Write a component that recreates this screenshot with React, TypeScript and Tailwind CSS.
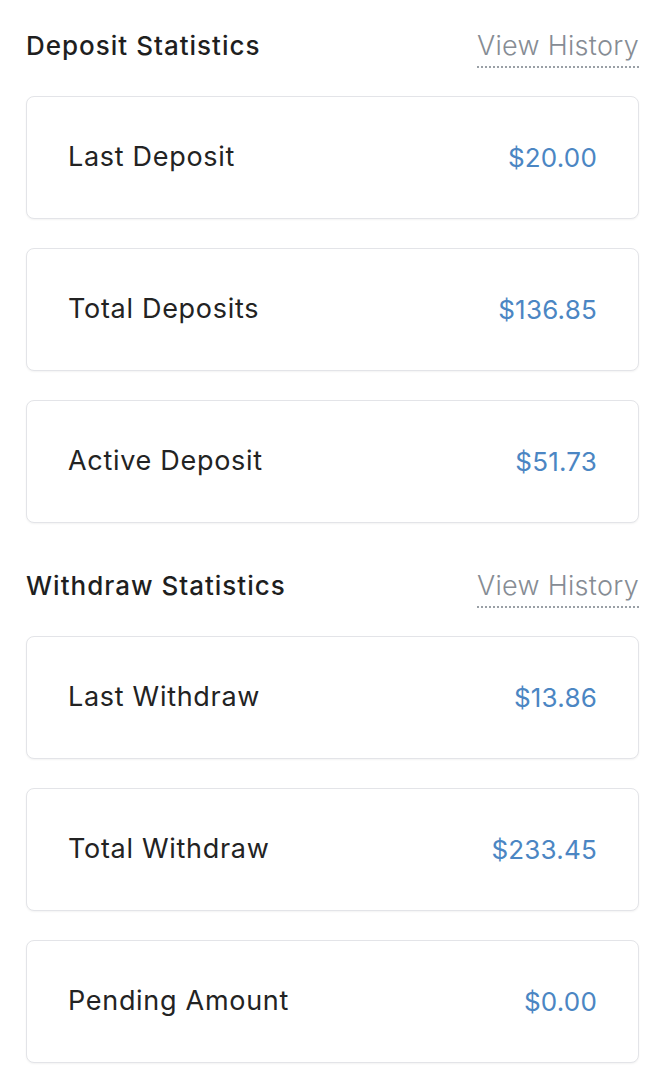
// Deposit / withdraw statistics panel
const sections = [
  {
    title: 'Deposit Statistics',
    rows: [
      { label: 'Last Deposit', value: '$20.00' },
      { label: 'Total Deposits', value: '$136.85' },
      { label: 'Active Deposit', value: '$51.73' },
    ],
  },
  {
    title: 'Withdraw Statistics',
    rows: [
      { label: 'Last Withdraw', value: '$13.86' },
      { label: 'Total Withdraw', value: '$233.45' },
      { label: 'Pending Amount', value: '$0.00' },
    ],
  },
];

export default function App() {
  return (
    <div
      className="min-h-screen bg-white px-[26px] pt-[20px] pb-[16px]"
      style={{ fontFamily: 'Inter, "Noto Sans", sans-serif' }}
    >
      {sections.map((s, i) => (
        <section key={s.title} className={i > 0 ? 'mt-[37px]' : ''}>
          {/* 헤더 */}
          <div className="flex items-start justify-between h-[52px] mb-[24px]">
            <h2 className="text-[26px] leading-[52px] font-medium text-[#1f1f1f] tracking-[1px]">
              {s.title}
            </h2>
            <a className="mt-[9px] text-[27px] leading-[34px] font-light text-[#868c94] tracking-[0.3px] border-b-2 border-dotted border-[#9aa0a6] pb-[3px]">
              View History
            </a>
          </div>

          {/* 카드 목록 */}
          <div className="flex flex-col gap-[29px]">
            {s.rows.map((r) => (
              <div
                key={r.label}
                className="h-[123px] rounded-lg border border-[#e3e4e8] bg-white shadow-[0_1px_2px_rgba(0,0,0,0.05)] flex items-center justify-between pl-[41px] pr-[41px]"
              >
                <span className="text-[27px] text-[#232323] tracking-[0.7px]">{r.label}</span>
                <span className="text-[26px] text-[#4b86c3] tracking-[0.2px]">{r.value}</span>
              </div>
            ))}
          </div>
        </section>
      ))}
    </div>
  );
}
